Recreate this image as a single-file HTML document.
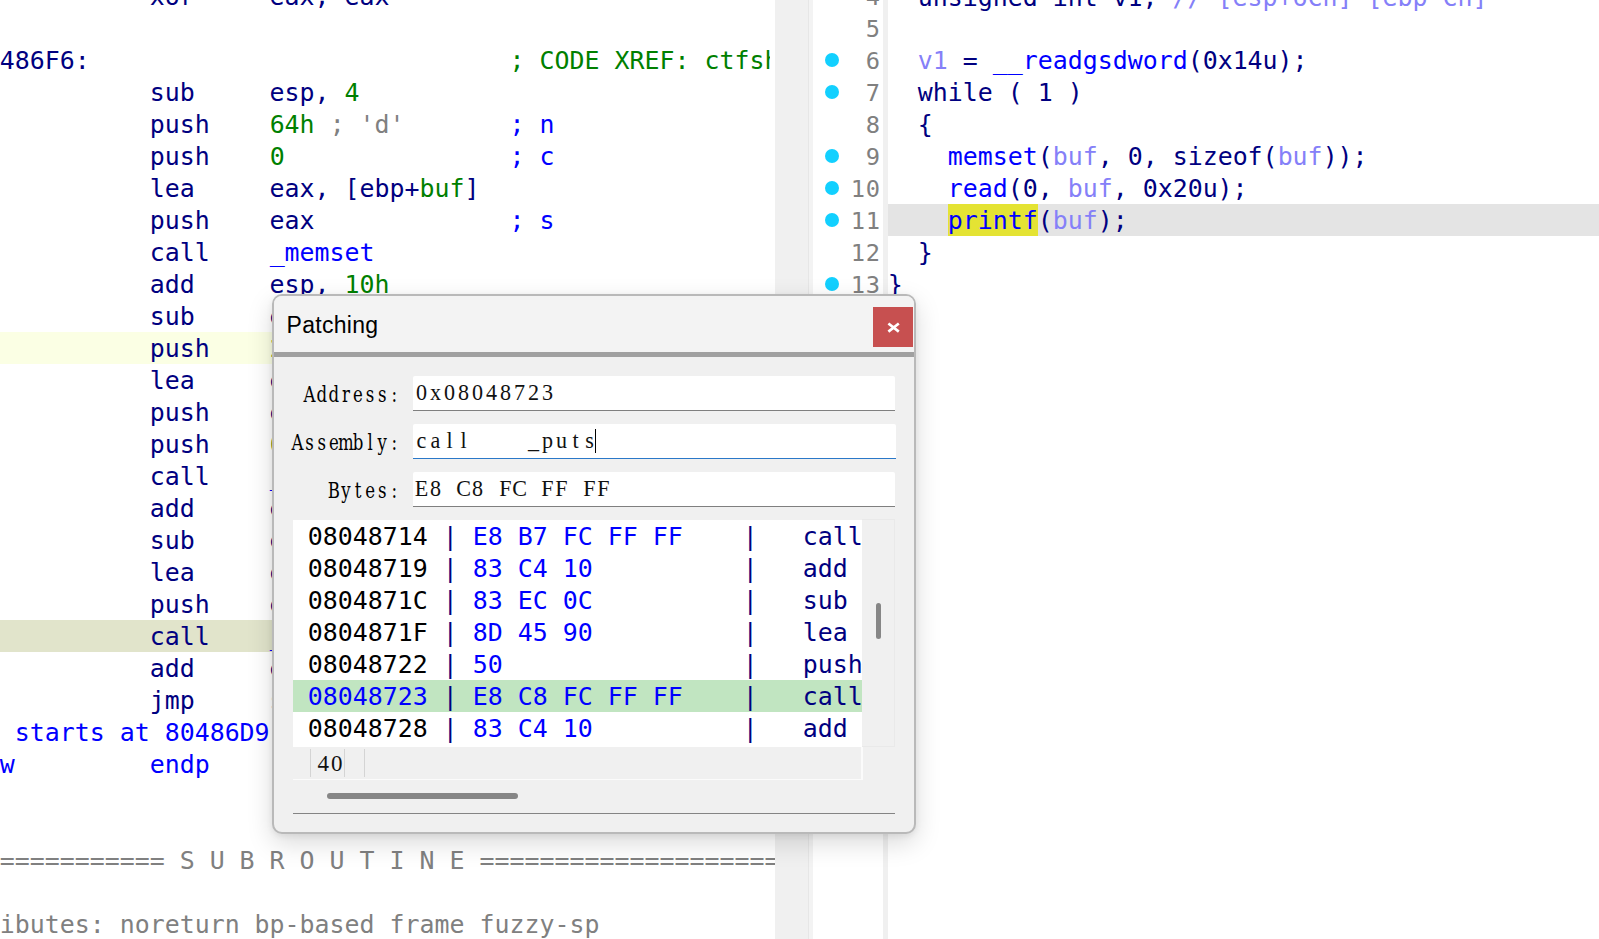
<!DOCTYPE html>
<html>
<head>
<meta charset="utf-8">
<title>Patching</title>
<style>
html,body{margin:0;padding:0;}
body{width:1599px;height:939px;overflow:hidden;background:#fff;position:relative;
  font-family:"DejaVu Sans Mono","Liberation Mono",monospace;}
.abs{position:absolute;}
.ln{position:absolute;white-space:pre;font-size:24.915px;line-height:32px;height:32px;color:#000080;padding-top:1px;}
#left{position:absolute;left:0;top:0;width:775px;height:939px;overflow:hidden;background:#fff;}
#left .ln{left:-0.3px;}
.g{color:#008000;}
.gr{color:#808080;}
.b{color:#0000ff;}
.nv{color:#000080;}
.lv{color:#8580f8;}
#right{position:absolute;left:888px;top:0;width:711px;height:939px;overflow:hidden;background:#fff;}
#right .ln{left:-0.3px;}
#gutter{position:absolute;left:813px;top:0;width:70px;height:939px;background:#fff;overflow:hidden;}
#gutter .ln{right:2.2px;color:#808080;text-align:right;font-size:23.7px;letter-spacing:0.73px;padding-top:1.4px;}
.dot{position:absolute;left:12px;width:14px;height:14px;border-radius:50%;background:#12d0ff;}
/* dialog */
#dlg{position:absolute;left:272px;top:294px;width:640px;height:536px;border:2px solid #b9b9b9;border-radius:10px;background:#f0f0f0;
  box-shadow:0 9px 26px rgba(0,0,0,0.15),0 2px 6px rgba(0,0,0,0.07);overflow:hidden;}
#dlg .title{position:absolute;left:0;top:0;width:640px;height:56px;background:#f3f3f3;}
#dlg .title span{position:absolute;left:12.5px;top:11px;font-family:"Liberation Sans","DejaVu Sans",sans-serif;font-size:23px;line-height:36px;color:#000;letter-spacing:0.3px;}
#dlg .close{position:absolute;left:599px;top:11px;width:40px;height:40px;background:#c75050;}
#dlg .sep{position:absolute;left:0;top:56px;width:640px;height:4.7px;background:#a0a0a0;}
.inp{position:absolute;left:139px;width:482px;height:33.6px;background:#fff;border-bottom:1.4px solid #7f7f7f;border-radius:2px 2px 0 0;}
.labt{font-family:"DejaVu Serif","Liberation Serif","Noto Serif CJK SC",serif;font-size:22.4px;fill:#000;}
.inpt{white-space:pre;font-family:"Liberation Serif","Noto Serif CJK SC",serif;font-size:23px;fill:#111;}
.stt{font-family:"Liberation Serif","Noto Serif CJK SC",serif;font-size:23px;fill:#111;}
#list{position:absolute;left:19px;top:224px;width:569px;height:227px;background:#fff;overflow:hidden;}
#list .ln{left:14.8px;color:#000;}
</style>
</head>
<body>
<div id="left">
<div class="ln" style="top:-20px">          xor     eax, eax</div>
<div class="ln" style="top:44px;width:770.3px;overflow:hidden">486F6:                            <span class="g">; CODE XREF: ctfshow+4F</span></div>
<div class="ln" style="top:76px">          sub     esp, <span class="g">4</span></div>
<div class="ln" style="top:108px">          push    <span class="g">64h</span> <span class="gr">; 'd'</span>       <span class="b">; n</span></div>
<div class="ln" style="top:140px">          push    <span class="g">0</span>               <span class="b">; c</span></div>
<div class="ln" style="top:172px">          lea     eax, [ebp+<span class="g">buf</span>]</div>
<div class="ln" style="top:204px">          push    eax             <span class="b">; s</span></div>
<div class="ln" style="top:236px">          call    <span class="b">_memset</span></div>
<div class="ln" style="top:268px">          add     esp, <span class="g">10h</span></div>
<div class="ln" style="top:300px">          sub     esp, <span class="g">4</span></div>
<div class="abs" style="left:0;top:332px;width:775px;height:32px;background:#fbffe4"></div>
<div class="ln" style="top:332px">          push    <span class="g">20h</span></div>
<div class="ln" style="top:364px">          lea     eax, [ebp+<span class="g">buf</span>]</div>
<div class="ln" style="top:396px">          push    eax</div>
<div class="ln" style="top:428px">          push    <span class="g">0</span></div>
<div class="ln" style="top:460px">          call    <span class="b">_read</span></div>
<div class="ln" style="top:492px">          add     esp, <span class="g">10h</span></div>
<div class="ln" style="top:524px">          sub     esp, <span class="g">0Ch</span></div>
<div class="ln" style="top:556px">          lea     eax, [ebp+<span class="g">buf</span>]</div>
<div class="ln" style="top:588px">          push    eax</div>
<div class="abs" style="left:0;top:620px;width:775px;height:32px;background:#e1e4cb"></div>
<div class="ln" style="top:620px">          call    <span class="b">_printf</span></div>
<div class="ln" style="top:652px">          add     esp, <span class="g">10h</span></div>
<div class="ln" style="top:684px">          jmp     short loc_80486F6</div>
<div class="ln b" style="top:716px"> starts at 80486D9</div>
<div class="ln b" style="top:748px">w         endp</div>
<div class="ln gr" style="top:844px">=========== S U B R O U T I N E =======================================</div>
<div class="ln gr" style="top:908px">ibutes: noreturn bp-based frame fuzzy-sp</div>
</div>

<!-- splitter / scrollbar strip -->
<div class="abs" style="left:775px;top:0;width:38px;height:939px;background:#f0f0f0"></div>
<div class="abs" style="left:808px;top:0;width:1px;height:939px;background:#e6e6e6"></div>
<div class="abs" style="left:809px;top:0;width:4px;height:939px;background:#f3f3f3"></div>

<div id="gutter">
<div class="ln" style="top:-20px">4</div>
<div class="ln" style="top:12px">5</div>
<div class="dot" style="top:53px"></div><div class="ln" style="top:44px">6</div>
<div class="dot" style="top:85px"></div><div class="ln" style="top:76px">7</div>
<div class="ln" style="top:108px">8</div>
<div class="dot" style="top:149px"></div><div class="ln" style="top:140px">9</div>
<div class="dot" style="top:181px"></div><div class="ln" style="top:172px">10</div>
<div class="dot" style="top:213px"></div><div class="ln" style="top:204px">11</div>
<div class="ln" style="top:236px">12</div>
<div class="dot" style="top:277px"></div><div class="ln" style="top:268px">13</div>
</div>
<div class="abs" style="left:883px;top:0;width:5px;height:939px;background:#f0f0f0"></div>

<div id="right">
<div class="ln" style="top:-19px">  unsigned int v1; <span class="lv">// [esp+6Ch] [ebp-Ch]</span></div>
<div class="ln" style="top:44px">  <span class="lv">v1</span> = <span class="b">__readgsdword</span>(0x14u);</div>
<div class="ln" style="top:76px">  while ( 1 )</div>
<div class="ln" style="top:108px">  {</div>
<div class="ln" style="top:140px">    <span class="b">memset</span>(<span class="lv">buf</span>, 0, sizeof(<span class="lv">buf</span>));</div>
<div class="ln" style="top:172px">    <span class="b">read</span>(0, <span class="lv">buf</span>, 0x20u);</div>
<div class="abs" style="left:0;top:204px;width:711px;height:32px;background:#e4e4e4"></div>
<div class="abs" style="left:60px;top:204px;width:90px;height:32px;background:#e4e333"></div>
<div class="ln" style="top:204px">    <span class="b">printf</span>(<span class="lv">buf</span>);</div>
<div class="ln" style="top:236px">  }</div>
<div class="ln" style="top:268px">}</div>
</div>

<div id="dlg">
  <div class="title"><span>Patching</span></div>
  <div class="close"><svg width="40" height="40" viewBox="0 0 40 40"><path d="M15.4 16.5 L25.8 24.6 M25.8 16.5 L15.4 24.6" stroke="#fff" stroke-width="2.7" fill="none"/></svg></div>
  <div class="sep"></div>
  <div class="inp" style="top:80px"></div>
  <div class="inp" style="top:128px;left:138.5px;width:483.5px;height:33.8px;border-bottom:1.7px solid #2a78c8"></div>
  <div class="inp" style="top:176px"></div>
  <div class="abs" style="left:321px;top:133px;width:1.3px;height:24px;background:#000"></div>
  <svg class="abs" style="left:0;top:0" width="640" height="536" viewBox="0 0 640 536">
    <g class="labt" text-anchor="middle">
      <text transform="scale(0.74 1)" x="48.11 64.46 80.81 97.16 113.51 129.86 146.22 162.57" y="106">Address:</text>
      <text transform="scale(0.74 1)" x="31.76 48.11 64.46 80.81 97.16 113.51 129.86 146.22 162.57" y="154">Assembly:</text>
      <text transform="scale(0.74 1)" x="80.81 97.16 113.51 129.86 146.22 162.57" y="202">Bytes:</text>
    </g>
    <g class="inpt" text-anchor="middle">
      <text transform="scale(0.96 1)" x="153.65 168.23 182.81 197.4 211.98 226.56 241.15 255.73 270.31 284.9" y="104">0x08048723</text>
      <text transform="scale(0.96 1)" x="153.65 168.23 182.81 197.4 211.98 226.56 241.15 255.73 270.31 284.9 299.48 314.06 328.65" y="152" xml:space="preserve">call    _puts</text>
      <text transform="scale(0.96 1)" x="153.65 168.23 182.81 197.4 211.98 226.56 241.15 255.73 270.31 284.9 299.48 314.06 328.65 343.23" y="200">E8 C8 FC FF FF</text>
    </g>
    <g class="stt" text-anchor="middle">
      <text x="49.3 62.7" y="475">40</text>
    </g>
  </svg>
  <div id="list">
    <div class="abs" style="left:0;top:160px;width:569px;height:32px;background:#c1e5c1"></div>
    <div class="ln" style="top:0px">08048714 <span class="nv">|</span> <span class="b">E8 B7 FC FF FF</span>    <span class="nv">|   call    _memset</span></div>
    <div class="ln" style="top:32px">08048719 <span class="nv">|</span> <span class="b">83 C4 10</span>          <span class="nv">|   add     esp, 10h</span></div>
    <div class="ln" style="top:64px">0804871C <span class="nv">|</span> <span class="b">83 EC 0C</span>          <span class="nv">|   sub     esp, 0Ch</span></div>
    <div class="ln" style="top:96px">0804871F <span class="nv">|</span> <span class="b">8D 45 90</span>          <span class="nv">|   lea     eax, [ebp+buf]</span></div>
    <div class="ln" style="top:128px">08048722 <span class="nv">|</span> <span class="b">50</span>                <span class="nv">|   push    eax</span></div>
    <div class="ln" style="top:160px"><span class="b">08048723</span> <span class="nv">|</span> <span class="b">E8 C8 FC FF FF</span>    <span class="nv">|   call    _printf</span></div>
    <div class="ln" style="top:192px">08048728 <span class="nv">|</span> <span class="b">83 C4 10</span>          <span class="nv">|   add     esp, 10h</span></div>
  </div>
  <!-- scroll area frame -->
  <div class="abs" style="left:588px;top:223px;width:33px;height:228px;border:1px solid #e9e9e9;border-left:none;box-sizing:border-box"></div>
  <div class="abs" style="left:602px;top:307px;width:5px;height:36px;border-radius:2.5px;background:#868686"></div>
  <!-- status bar -->
  <div class="abs" style="left:36px;top:453px;width:1px;height:28px;background:#d4d4d4"></div>
  <div class="abs" style="left:70px;top:453px;width:1px;height:28px;background:#d4d4d4"></div>
  <div class="abs" style="left:90px;top:453px;width:1px;height:28px;background:#d4d4d4"></div>
  <div class="abs" style="left:19px;top:482.5px;width:569px;height:1.5px;background:#fbfbfb"></div>
  <div class="abs" style="left:587px;top:451px;width:1.5px;height:33px;background:#fbfbfb"></div>
  <!-- hscroll -->
  <div class="abs" style="left:53px;top:497.3px;width:191px;height:6px;border-radius:3px;background:#868686"></div>
  <div class="abs" style="left:19px;top:517px;width:602px;height:1.3px;background:#848484"></div>
</div>
</body>
</html>
